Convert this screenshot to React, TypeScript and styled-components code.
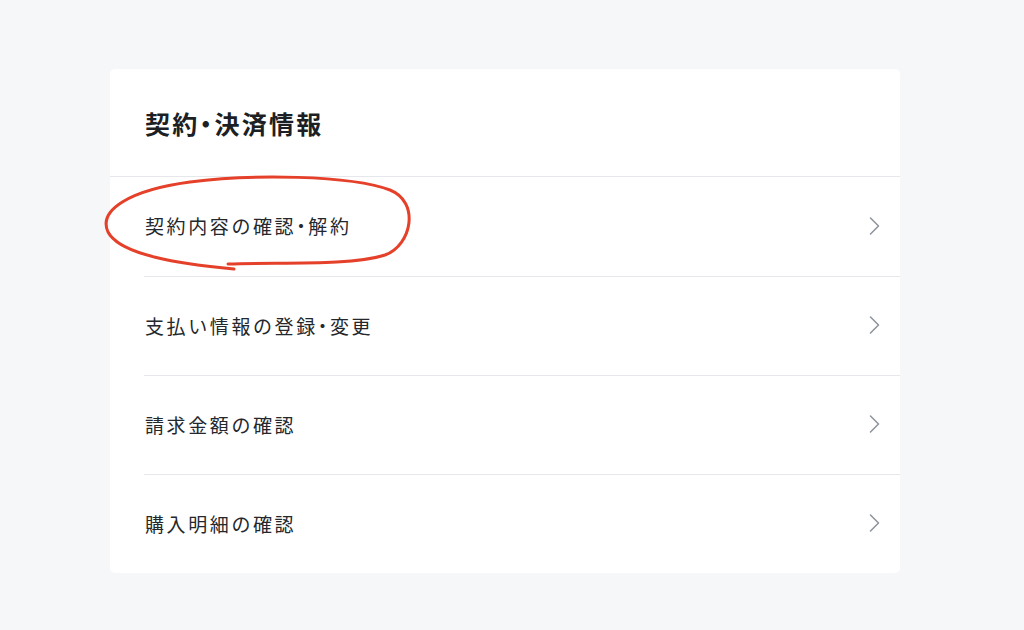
import styled, { createGlobalStyle } from 'styled-components';

const GlobalStyle = createGlobalStyle`
  html, body {
    margin: 0;
    padding: 0;
    background: #f6f7f9;
    font-family: "Noto Sans CJK JP", "Noto Sans", sans-serif;
  }
`;

const Page = styled.div`
  min-height: 630px;
  padding: 69px 0 0 110px;
  box-sizing: border-box;
`;

const Card = styled.section`
  position: relative;
  width: 790px;
  background: #ffffff;
  border-radius: 5px;
`;

const Header = styled.header`
  height: 108px;
  box-sizing: border-box;
  display: flex;
  align-items: center;
  padding-left: 35px;
  border-bottom: 1px solid #e6e7ea;
`;

const Title = styled.h2`
  margin: 0;
  font-size: 25px;
  font-weight: 700;
  letter-spacing: 2.3px;
  color: #1c1f24;
`;

// half-width middle dot, as in the reference
const Dot = styled.span`
  font-feature-settings: "halt";
`;

const List = styled.ul`
  list-style: none;
  margin: 0;
  padding: 0 0 0 34px;
`;

const Row = styled.li`
  height: 99px;
  box-sizing: border-box;
  display: flex;
  align-items: center;
  justify-content: space-between;
  padding: 0 20px 2px 1px;
  border-top: 1px solid #e6e7ea;
  cursor: pointer;

  &:first-child {
    border-top: none;
  }
`;

const Label = styled.span`
  font-size: 19px;
  letter-spacing: 2.6px;
  color: #24272c;
`;

const Chevron = () => (
  <svg width="11" height="18" viewBox="0 0 11 18" fill="none">
    <polyline points="1.5,1 9.5,9 1.5,17" stroke="#8d929a" strokeWidth="1.5" strokeLinecap="round" strokeLinejoin="round" />
  </svg>
);

const Scribble = styled.svg`
  position: absolute;
  left: 0;
  top: 0;
  width: 790px;
  height: 300px;
  overflow: visible;
  pointer-events: none;
`;

function withDot(text: string) {
  const parts = text.split('・');
  return parts.map((p, i) => (
    <span key={i}>
      {p}
      {i < parts.length - 1 && <Dot>・</Dot>}
    </span>
  ));
}

const items = ['契約内容の確認・解約', '支払い情報の登録・変更', '請求金額の確認', '購入明細の確認'];

export default function App() {
  return (
    <>
      <GlobalStyle />
      <Page>
        <Card>
          <Header>
            <Title>{withDot('契約・決済情報')}</Title>
          </Header>
          <List>
            {items.map((t) => (
              <Row key={t}>
                <Label>{withDot(t)}</Label>
                <Chevron />
              </Row>
            ))}
          </List>
          <Scribble viewBox="0 0 790 300">
            <path
              d="M 124 200 C 70 195, 10 186, -2 163 C -12 141, 20 121, 80 113 C 140 105, 240 106, 280 121 C 310 133, 302 176, 275 186 C 240 197, 170 193, 118 195"
              stroke="#e5402a"
              strokeWidth="3"
              fill="none"
              strokeLinecap="round"
              strokeLinejoin="round"
            />
          </Scribble>
        </Card>
      </Page>
    </>
  );
}
